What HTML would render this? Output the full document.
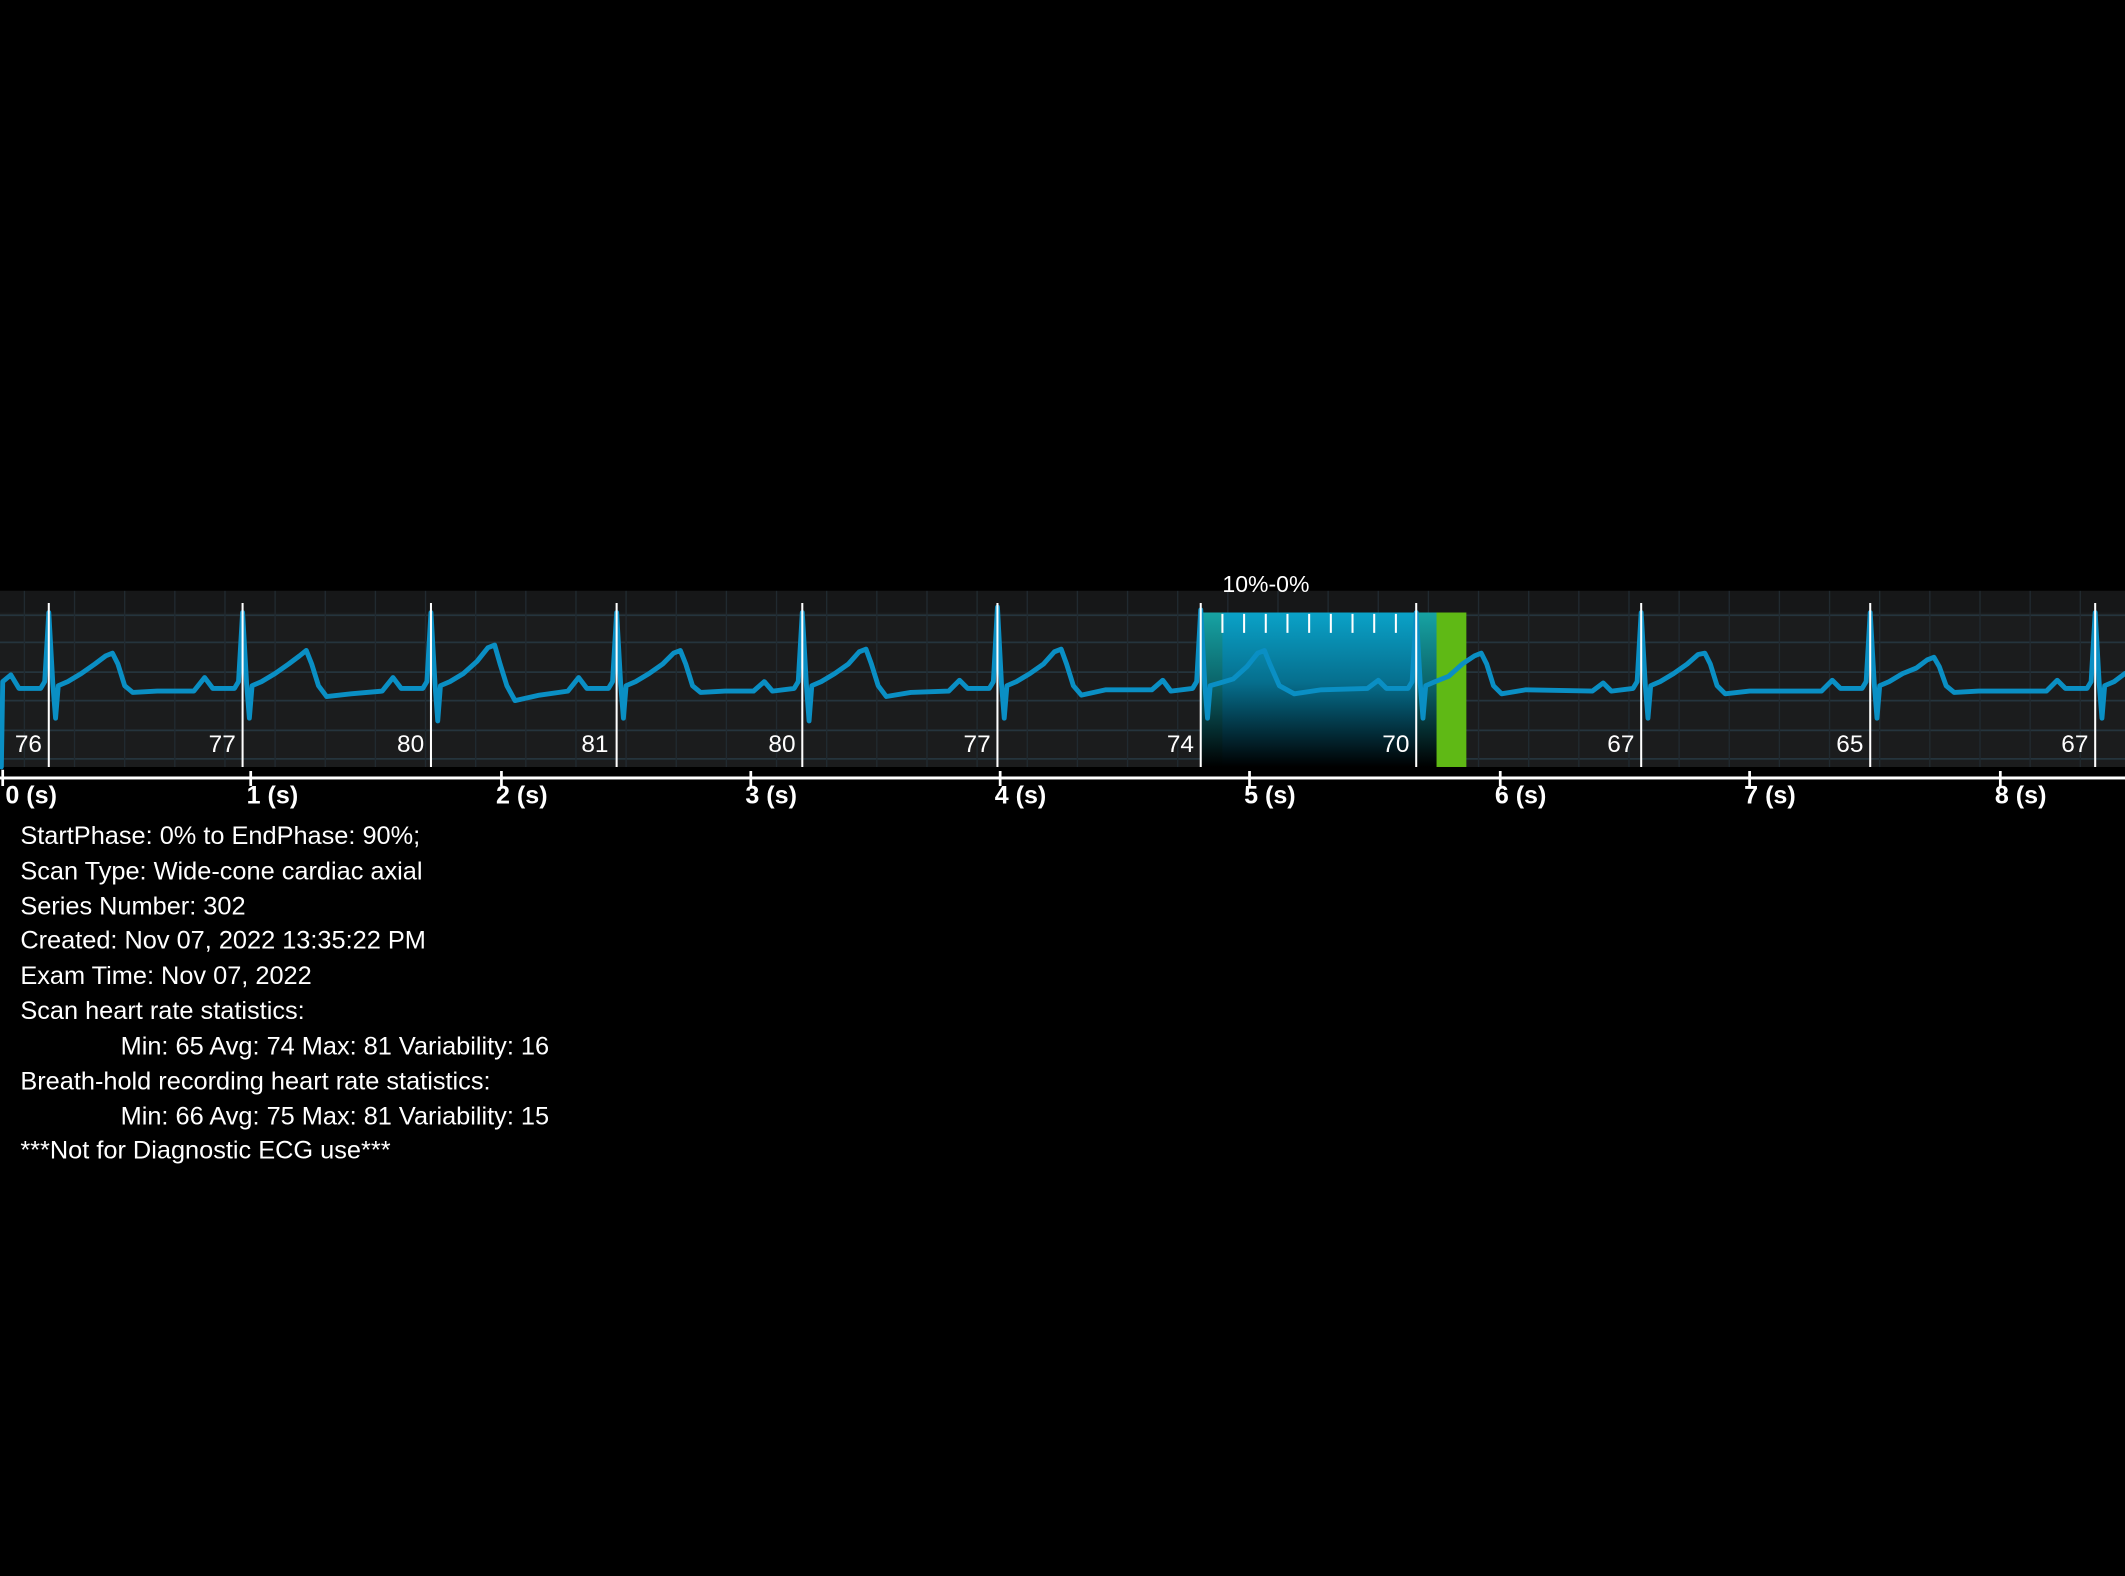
<!DOCTYPE html>
<html><head><meta charset="utf-8">
<style>
html,body{margin:0;padding:0;background:#000;width:2125px;height:1576px;overflow:hidden}
svg{position:absolute;left:0;top:0}
</style></head>
<body>
<svg width="2125" height="1576" viewBox="0 0 1568 1163" preserveAspectRatio="none" xmlns="http://www.w3.org/2000/svg" font-family="Liberation Sans, Arial, sans-serif">
<defs>
<linearGradient id="sel" x1="0" y1="0" x2="0" y2="1">
<stop offset="0" stop-color="#0aa2c8"/>
<stop offset="0.45" stop-color="#066f8e"/>
<stop offset="1" stop-color="#000"/>
</linearGradient>
<linearGradient id="teal" x1="0" y1="0" x2="0" y2="1">
<stop offset="0" stop-color="#1aa39a"/>
<stop offset="0.5" stop-color="#0b5c5c"/>
<stop offset="1" stop-color="#000"/>
</linearGradient>
</defs>
<rect x="0" y="436" width="1568" height="130" fill="#1b1c1d"/>
<rect x="0" y="436" width="1568" height="16" fill="#161718"/>
<g stroke="#25343d" stroke-width="1.3">
<line x1="0" y1="454" x2="1568" y2="454"/>
<line x1="0" y1="474" x2="1568" y2="474"/>
<line x1="0" y1="496" x2="1568" y2="496"/>
<line x1="0" y1="517" x2="1568" y2="517"/>
<line x1="0" y1="539" x2="1568" y2="539"/>
<line x1="0" y1="560" x2="1568" y2="560"/>
</g>
<g stroke="#212a30" stroke-width="1">
<path d="M18 436V566M55 436V566M92 436V566M129 436V566M166 436V566M203 436V566M240 436V566M277 436V566M314 436V566M351 436V566M388 436V566M425 436V566M462 436V566M499 436V566M536 436V566M573 436V566M610 436V566M647 436V566M684 436V566M721 436V566M758 436V566M795 436V566M832 436V566M869 436V566M906 436V566M943 436V566M980 436V566M1017 436V566M1054 436V566M1091 436V566M1128 436V566M1165 436V566M1202 436V566M1239 436V566M1276 436V566M1313 436V566M1350 436V566M1387 436V566M1424 436V566M1461 436V566M1498 436V566M1535 436V566"/>
</g>
<rect x="886" y="452" width="175" height="114" fill="url(#sel)"/>
<rect x="886" y="452" width="16" height="114" fill="url(#teal)" opacity="0.8"/>
<rect x="1045" y="452" width="16" height="114" fill="url(#teal)" opacity="0.8"/>
<rect x="1060" y="452" width="22" height="114" fill="#5fb915"/>
<g stroke="#fff" stroke-width="1.5">
<path d="M902 453V467M918 453V467M934 453V467M950 453V467M966 453V467M982 453V467M998 453V467M1014 453V467M1030 453V467"/>
</g>
<path fill="none" stroke="#0a8fc4" stroke-width="3.6" stroke-linejoin="round" stroke-linecap="round" d="M1,566 L2,503 L8,498 L14,508 L30,508 L33,503 L36,452 L39,505 L41,530 L43,506 L50,503 L60,497 L70,490 L78,484 L83,482 L87,490 L92,506 L98,511 L116,510 L143,510 L151,500 L157,508 L173,508 L176,503 L179,452 L182,505 L184,530 L186,506 L193,503 L203,497 L213,490 L221,484 L226,480 L230,490 L235,506 L241,514 L259,512 L282,510 L290,500 L296,508 L312,508 L315,503 L318,452 L321,505 L323,532 L325,506 L332,503 L342,497 L352,488 L360,478 L365,476 L369,490 L374,506 L380,517 L398,513 L419,510 L427,500 L433,508 L449,508 L452,503 L455,452 L458,505 L460,530 L462,506 L469,503 L479,497 L489,490 L497,482 L502,480 L506,490 L511,506 L517,511 L535,510 L556,510 L564,503 L570,510 L586,508 L589,503 L592,452 L595,505 L597,532 L599,506 L606,503 L616,497 L626,490 L634,481 L639,479 L643,490 L648,506 L654,514 L672,511 L700,510 L708,502 L714,508 L730,508 L733,503 L736,448 L739,505 L741,530 L743,506 L750,503 L760,497 L770,490 L778,481 L783,479 L787,490 L792,506 L798,513 L816,509 L850,509 L858,502 L864,510 L880,508 L883,503 L886,450 L889,505 L891,530 L893,506 L900,504 L910,501 L920,492 L928,482 L933,480 L937,490 L944,506 L955,512 L975,509 L1009,508 L1017,502 L1023,508 L1039,508 L1042,503 L1045,452 L1048,505 L1050,530 L1052,506 L1059,503 L1069,499 L1079,490 L1088,484 L1093,482 L1097,490 L1102,506 L1108,512 L1126,509 L1175,510 L1183,504 L1189,510 L1205,508 L1208,503 L1211,452 L1214,505 L1216,530 L1218,506 L1225,503 L1235,497 L1245,490 L1253,483 L1258,482 L1262,490 L1267,506 L1273,512 L1291,510 L1344,510 L1352,502 L1358,508 L1374,508 L1377,503 L1380,452 L1383,505 L1385,530 L1387,506 L1394,503 L1404,497 L1414,493 L1422,487 L1427,485 L1431,492 L1436,506 L1442,511 L1460,510 L1510,510 L1518,502 L1524,508 L1540,508 L1543,503 L1546,452 L1549,505 L1551,530 L1553,506 L1560,503 L1568,497"/>
<g stroke="#fff" stroke-width="1.5">
<path d="M36 445V566M179 445V566M318 445V566M455 445V566M592 445V566M736 445V566M886 445V566M1045 445V566M1211 445V566M1380 445V566M1546 445V566"/>
</g>
<g fill="#fff" font-size="18" text-anchor="end">
<text x="31" y="555">76</text>
<text x="174" y="555">77</text>
<text x="313" y="555">80</text>
<text x="449" y="555">81</text>
<text x="587" y="555">80</text>
<text x="731" y="555">77</text>
<text x="881" y="555">74</text>
<text x="1040" y="555">70</text>
<text x="1206" y="555">67</text>
<text x="1375" y="555">65</text>
<text x="1541" y="555">67</text>
</g>
<text x="902" y="437" fill="#fff" font-size="17">10%-0%</text>
<rect x="0" y="573" width="1568" height="2.2" fill="#fff"/>
<g stroke="#fff" stroke-width="2">
<path d="M2 568V580M185 569V580M370 569V580M554 569V580M738 569V580M922 569V580M1107 569V580M1291 569V580M1476 569V580"/>
</g>
<g fill="#fff" font-size="18.5" font-weight="bold">
<text x="4" y="593">0 (s)</text>
<text x="182" y="593">1 (s)</text>
<text x="366" y="593">2 (s)</text>
<text x="550" y="593">3 (s)</text>
<text x="734" y="593">4 (s)</text>
<text x="918" y="593">5 (s)</text>
<text x="1103" y="593">6 (s)</text>
<text x="1287" y="593">7 (s)</text>
<text x="1472" y="593">8 (s)</text>
</g>
<g fill="#fff" font-size="18.7">
<text x="15" y="623">StartPhase: 0% to EndPhase: 90%;</text>
<text x="15" y="649">Scan Type: Wide-cone cardiac axial</text>
<text x="15" y="675">Series Number: 302</text>
<text x="15" y="700">Created: Nov 07, 2022 13:35:22 PM</text>
<text x="15" y="726">Exam Time: Nov 07, 2022</text>
<text x="15" y="752">Scan heart rate statistics:</text>
<text x="89" y="778">Min: 65 Avg: 74 Max: 81 Variability: 16</text>
<text x="15" y="804">Breath-hold recording heart rate statistics:</text>
<text x="89" y="830">Min: 66 Avg: 75 Max: 81 Variability: 15</text>
<text x="15" y="855">***Not for Diagnostic ECG use***</text>
</g>
</svg>
</body></html>
